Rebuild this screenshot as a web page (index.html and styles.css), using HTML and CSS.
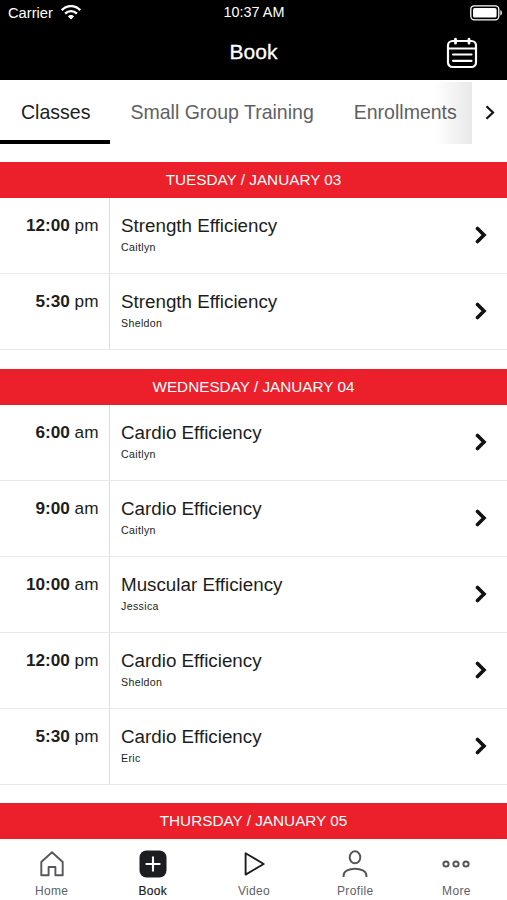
FILE: index.html
```
<!DOCTYPE html>
<html lang="en">
<head>
  <meta charset="UTF-8" />
  <meta name="viewport" content="width=device-width, initial-scale=1.0"/>
  <title>Book</title>
  <link rel="stylesheet" href="styles.css">
</head>
<body>

  <header class="header">
    <div class="status">
      <div class="carrier">
        <span>Carrier</span>
        <svg width="20" height="15" viewBox="0 0 20 15" fill="none" stroke="#fff" stroke-width="2.3">
          <path d="M0.8 5.2C6 -0.3 14 -0.3 19.2 5.2"/>
          <path d="M4.1 8.6C7.4 5.2 12.6 5.2 15.9 8.6"/>
          <path d="M7 11.4C8.6 9.5 11.4 9.5 13 11.4L10 14.4Z" fill="#fff" stroke="none"/>
        </svg>
      </div>
      <span class="clock">10:37 AM</span>
      <svg class="battery" width="33" height="16" viewBox="0 0 33 16">
        <rect x="0.8" y="0.8" width="28" height="14" rx="3.5" fill="none" stroke="#fff" stroke-width="1.3"/>
        <rect x="3" y="3" width="23.6" height="9.6" rx="1.7" fill="#fff"/>
        <path d="M30.4 5v5.6c2-.8 2-4.8 0-5.6z" fill="#fff"/>
      </svg>
    </div>
    <div class="title-bar">
      <h1>Book</h1>
      <svg class="calendar" width="32" height="32" viewBox="0 0 32 32" fill="none" stroke="#fff" stroke-width="2.2" stroke-linecap="round">
        <rect x="2" y="4" width="28" height="26" rx="4.5"/>
        <path d="M2 11.5h28"/>
        <path d="M9.5 2.2v4M23 2.2v4" stroke-width="2.8"/>
        <path d="M7 17.5h18.5M7 23.8h18.5"/>
      </svg>
    </div>
  </header>

  <nav class="tabs">
    <a class="tab active">Classes</a>
    <a class="tab">Small Group Training</a>
    <a class="tab">Enrollments</a>
    <div class="fade"></div>
    <div class="next">
      <svg width="10" height="15" viewBox="0 0 10 15" fill="none" stroke="#111" stroke-width="2.2"><path d="M1.5 1.2L8 7.5L1.5 13.8"/></svg>
    </div>
  </nav>

  <main class="schedule">
    <section class="day">
      <h2>TUESDAY / JANUARY 03</h2>
      <div class="row">
        <div class="time"><b>12:00</b> pm</div>
        <div class="info"><div class="name">Strength Efficiency</div><div class="coach">Caitlyn</div></div>
        <svg class="arrow" viewBox="0 0 12 18"><path d="M2.5 2.5L9 9L2.5 15.5"/></svg>
      </div>
      <div class="row">
        <div class="time"><b>5:30</b> pm</div>
        <div class="info"><div class="name">Strength Efficiency</div><div class="coach">Sheldon</div></div>
        <svg class="arrow" viewBox="0 0 12 18"><path d="M2.5 2.5L9 9L2.5 15.5"/></svg>
      </div>
    </section>

    <section class="day">
      <h2>WEDNESDAY / JANUARY 04</h2>
      <div class="row">
        <div class="time"><b>6:00</b> am</div>
        <div class="info"><div class="name">Cardio Efficiency</div><div class="coach">Caitlyn</div></div>
        <svg class="arrow" viewBox="0 0 12 18"><path d="M2.5 2.5L9 9L2.5 15.5"/></svg>
      </div>
      <div class="row">
        <div class="time"><b>9:00</b> am</div>
        <div class="info"><div class="name">Cardio Efficiency</div><div class="coach">Caitlyn</div></div>
        <svg class="arrow" viewBox="0 0 12 18"><path d="M2.5 2.5L9 9L2.5 15.5"/></svg>
      </div>
      <div class="row">
        <div class="time"><b>10:00</b> am</div>
        <div class="info"><div class="name">Muscular Efficiency</div><div class="coach">Jessica</div></div>
        <svg class="arrow" viewBox="0 0 12 18"><path d="M2.5 2.5L9 9L2.5 15.5"/></svg>
      </div>
      <div class="row">
        <div class="time"><b>12:00</b> pm</div>
        <div class="info"><div class="name">Cardio Efficiency</div><div class="coach">Sheldon</div></div>
        <svg class="arrow" viewBox="0 0 12 18"><path d="M2.5 2.5L9 9L2.5 15.5"/></svg>
      </div>
      <div class="row">
        <div class="time"><b>5:30</b> pm</div>
        <div class="info"><div class="name">Cardio Efficiency</div><div class="coach">Eric</div></div>
        <svg class="arrow" viewBox="0 0 12 18"><path d="M2.5 2.5L9 9L2.5 15.5"/></svg>
      </div>
    </section>

    <section class="day">
      <h2>THURSDAY / JANUARY 05</h2>
    </section>
  </main>

  <nav class="bottom-nav">
    <a class="nav-item">
      <svg width="28" height="28" viewBox="0 0 28 28" fill="none" stroke="#55565a" stroke-width="1.9" stroke-linejoin="round">
        <path d="M3.3 12L14 2.3L24.7 12V25.3H17.4V17H10.6V25.3H3.3Z"/>
      </svg>
      <span>Home</span>
    </a>
    <a class="nav-item active">
      <svg width="28" height="28" viewBox="0 0 28 28">
        <rect x="0.5" y="0.5" width="27" height="27" rx="7" fill="#1c1d20"/>
        <path d="M14 6.6v14.8M6.6 14h14.8" stroke="#fff" stroke-width="2.1"/>
      </svg>
      <span>Book</span>
    </a>
    <a class="nav-item">
      <svg width="28" height="28" viewBox="0 0 28 28" fill="none" stroke="#1c1d20" stroke-width="1.9" stroke-linejoin="round">
        <path d="M5.6 3.2V24.6L23.7 14Z"/>
      </svg>
      <span>Video</span>
    </a>
    <a class="nav-item">
      <svg width="28" height="28" viewBox="0 0 28 28" fill="none" stroke="#55565a" stroke-width="2">
        <ellipse cx="14" cy="7.3" rx="5.3" ry="6"/>
        <path d="M2.6 27V25.5C2.6 16.5 25.4 16.5 25.4 25.5V27"/>
      </svg>
      <span>Profile</span>
    </a>
    <a class="nav-item">
      <svg width="28" height="28" viewBox="0 0 28 28" fill="none" stroke="#55565a" stroke-width="2">
        <circle cx="4" cy="14" r="2.6"/>
        <circle cx="14" cy="14" r="2.6"/>
        <circle cx="24" cy="14" r="2.6"/>
      </svg>
      <span>More</span>
    </a>
  </nav>

</body>
</html>
```
FILE: styles.css
```
* {
  box-sizing: border-box;
}

body {
  margin: 0;
  height: 900px;
  display: flex;
  flex-direction: column;
  overflow: hidden;
  background: #fff;
  color: #1c1d20;
  font-family: "Liberation Sans", Arial, sans-serif;
}

h1, h2 {
  margin: 0;
  font-weight: normal;
}

svg {
  display: block;
  flex: none;
}

.header {
  height: 80px;
  flex: none;
  background: #000;
  color: #fff;
}

.status {
  height: 25px;
  padding: 0 4px 0 8px;
  display: grid;
  grid-template-columns: 1fr auto 1fr;
  align-items: center;
  font-size: 14.7px;
}

.carrier {
  display: flex;
  align-items: center;
  gap: 8px;
}

.clock {
  padding-right: 3px;
  font-size: 14.4px;
  line-height: 25px;
}

.battery {
  justify-self: end;
}

.title-bar {
  height: 55px;
  padding: 0 29px;
  display: grid;
  grid-template-columns: 1fr auto 1fr;
  align-items: center;
}

.title-bar h1 {
  grid-column: 2;
  font-size: 21px;
  line-height: 53px;
  padding-bottom: 2px;
  -webkit-text-stroke: 0.3px #fff;
}

.calendar {
  justify-self: end;
}

.tabs {
  position: relative;
  height: 64px;
  flex: none;
  display: flex;
  overflow: hidden;
}

.tab {
  padding: 0 20px;
  line-height: 64px;
  font-size: 19.53px;
  color: #606165;
  white-space: nowrap;
}

.tab.active {
  padding-left: 21px;
  color: #1c1d20;
  border-bottom: 4px solid #000;
}

/* scroll hint over the last tab */
.fade {
  position: absolute;
  top: 2px;
  right: 35px;
  bottom: 0;
  width: 38px;
  background: linear-gradient(to right, rgba(0,0,0,0), rgba(0,0,0,0.09));
}

.next {
  position: absolute;
  top: 0;
  right: 0;
  width: 35px;
  height: 64px;
  background: #fff;
  display: flex;
  align-items: center;
  justify-content: center;
}

.schedule {
  flex: 1;
  min-height: 0;
  padding-top: 18.2px;
  overflow: hidden;
}

.day {
  margin-bottom: 18.1px;
}

.day h2 {
  height: 36px;
  line-height: 36px;
  background: #ec202b;
  color: #fff;
  text-align: center;
  font-size: 15.3px;
}

.row {
  height: 76.15px;
  display: flex;
  border-bottom: 1px solid #e8e9eb;
}

.time {
  width: 110px;
  flex: none;
  padding: 16px 10.5px 0 0;
  border-right: 1px solid #dcdde0;
  text-align: right;
  font-size: 17.2px;
  line-height: 22px;
}

.info {
  flex: 1;
  padding: 17px 0 0 11px;
}

.name {
  font-size: 18.8px;
  line-height: 22px;
}

.coach {
  margin-top: 3px;
  font-size: 10.6px;
  line-height: 14px;
  letter-spacing: 0.35px;
}

.arrow {
  width: 12px;
  height: 18px;
  margin: 28px 20.5px 0 0;
  fill: none;
  stroke: #111;
  stroke-width: 3.6;
  stroke-linecap: round;
}

.bottom-nav {
  height: 60px;
  flex: none;
  padding-left: 1px;
  display: flex;
  background: #fff;
}

.nav-item {
  flex: 1;
  padding-top: 10px;
  display: flex;
  flex-direction: column;
  align-items: center;
  gap: 6px;
  font-size: 12px;
  line-height: 15px;
  letter-spacing: 0.35px;
  color: #606165;
}

.nav-item.active {
  color: #1c1d20;
  -webkit-text-stroke: 0.2px #1c1d20;
}
```
